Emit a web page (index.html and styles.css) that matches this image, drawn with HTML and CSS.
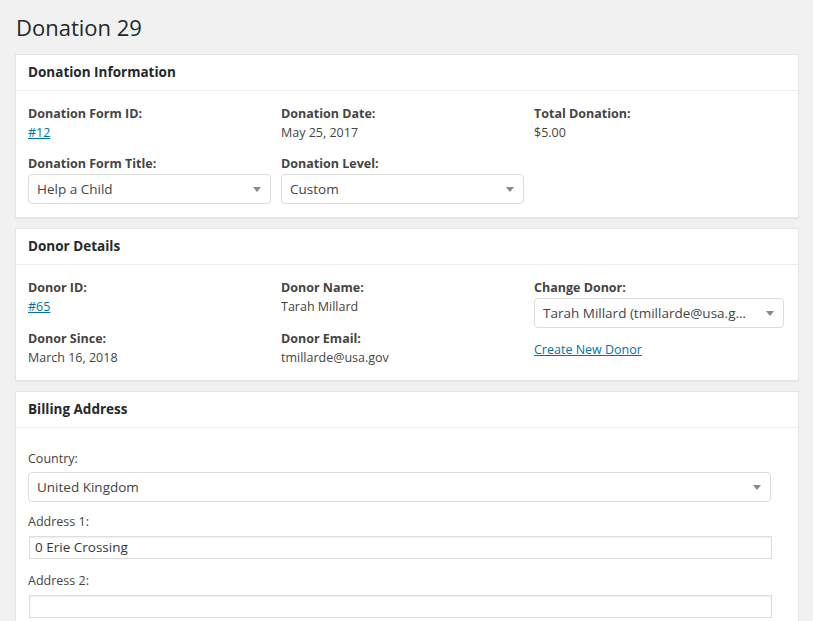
FILE: index.html
```html
<!DOCTYPE html>
<html lang="en">
<head>
<meta charset="utf-8">
<title>Donation 29</title>
<link rel="stylesheet" href="styles.css">
</head>
<body>
<div class="wrap">
  <h1 class="page-title">Donation 29</h1>

  <section class="panel">
    <h2 class="panel-head">Donation Information</h2>
    <div class="panel-body grid3 info">
      <div class="col">
        <div class="field">
          <div class="label">Donation Form ID:</div>
          <a class="value link" href="#">#12</a>
        </div>
        <div class="field">
          <div class="label">Donation Form Title:</div>
          <div class="select">Help a Child<span class="caret"></span></div>
        </div>
      </div>
      <div class="col">
        <div class="field">
          <div class="label">Donation Date:</div>
          <div class="value">May 25, 2017</div>
        </div>
        <div class="field">
          <div class="label">Donation Level:</div>
          <div class="select">Custom<span class="caret"></span></div>
        </div>
      </div>
      <div class="col">
        <div class="field">
          <div class="label">Total Donation:</div>
          <div class="value">$5.00</div>
        </div>
      </div>
    </div>
  </section>

  <section class="panel">
    <h2 class="panel-head">Donor Details</h2>
    <div class="panel-body grid3 donor">
      <div class="col">
        <div class="field">
          <div class="label">Donor ID:</div>
          <a class="value link" href="#">#65</a>
        </div>
        <div class="field">
          <div class="label">Donor Since:</div>
          <div class="value">March 16, 2018</div>
        </div>
      </div>
      <div class="col">
        <div class="field">
          <div class="label">Donor Name:</div>
          <div class="value">Tarah Millard</div>
        </div>
        <div class="field">
          <div class="label">Donor Email:</div>
          <div class="value">tmillarde@usa.gov</div>
        </div>
      </div>
      <div class="col">
        <div class="field">
          <div class="label">Change Donor:</div>
          <div class="select select-wide">Tarah Millard (tmillarde@usa.g…<span class="caret"></span></div>
        </div>
        <div class="field">
          <a class="value link new-donor" href="#">Create New Donor</a>
        </div>
      </div>
    </div>
  </section>

  <section class="panel">
    <h2 class="panel-head">Billing Address</h2>
    <div class="panel-body billing">
      <div class="bfield">
        <div class="blabel blabel-select">Country:</div>
        <div class="select select-full">United Kingdom<span class="caret"></span></div>
      </div>
      <div class="bfield">
        <div class="blabel">Address 1:</div>
        <div class="input">0 Erie Crossing</div>
      </div>
      <div class="bfield">
        <div class="blabel">Address 2:</div>
        <div class="input"></div>
      </div>
    </div>
  </section>
</div>
</body>
</html>
```

FILE: styles.css
```css
html, body {
  margin: 0;
  padding: 0;
  background: #f1f1f1;
  color: #444;
  font-family: "Open Sans", "Noto Sans", sans-serif;
  font-size: 13px;
  overflow: hidden;
}

.wrap {
  padding: 0 14px 0 15px;
}

.page-title {
  margin: 0;
  padding: 9px 0 9px 1px;
  font-size: 22px;
  line-height: 36px;
  font-weight: 400;
  color: #23282d;
}

.panel {
  background: #fff;
  border: 1px solid #e5e5e5;
  box-shadow: 0 1px 1px rgba(0,0,0,0.04);
  margin-bottom: 10px;
}

.panel-head {
  margin: 0;
  padding: 8px 12px;
  font-size: 13.5px;
  line-height: 19px;
  font-weight: 700;
  color: #23282d;
  border-bottom: 1px solid #eee;
}

.panel-body {
  padding: 14px 12px 13px;
}

.grid3 {
  display: grid;
  grid-template-columns: 253px 253px 1fr;
}

.col {
  display: flex;
  flex-direction: column;
  gap: 13px;
}

.donor .col {
  gap: 14px;
}

.field {
  display: flex;
  flex-direction: column;
}

.label {
  font-weight: 700;
  font-size: 12.5px;
  line-height: 18px;
  color: #444;
  margin-bottom: 1px;
}

.value {
  font-size: 12.5px;
  line-height: 18px;
  color: #444;
}

.link {
  color: #0073aa;
  text-decoration: underline;
  align-self: flex-start;
}

.select {
  position: relative;
  box-sizing: border-box;
  width: 243px;
  height: 30px;
  border: 1px solid #ddd;
  border-radius: 4px;
  padding: 0 28px 0 8px;
  font-size: 13.5px;
  line-height: 28px;
  color: #444;
  background: #fff;
  white-space: nowrap;
  overflow: hidden;
}

.select-wide {
  width: 250px;
}

.select-full {
  width: 743px;
}

.caret {
  position: absolute;
  right: 9px;
  top: 12px;
  width: 0;
  height: 0;
  border-left: 4px solid transparent;
  border-right: 4px solid transparent;
  border-top: 5px solid #888;
}

.new-donor {
  margin-top: -1px;
}

.billing {
  padding-top: 22px;
  padding-bottom: 20px;
  display: flex;
  flex-direction: column;
  gap: 11px;
}

.bfield {
  display: flex;
  flex-direction: column;
}

.blabel {
  font-size: 12.5px;
  line-height: 18px;
  color: #444;
  margin-bottom: 5px;
}

.blabel-select {
  margin-bottom: 4px;
}

.input {
  box-sizing: border-box;
  width: 743px;
  height: 23px;
  margin-left: 1px;
  margin-bottom: 2px;
  border: 1px solid #ddd;
  box-shadow: inset 0 1px 2px rgba(0,0,0,0.07);
  padding: 0 5px;
  font-size: 13.5px;
  line-height: 21px;
  color: #32373c;
}
```
